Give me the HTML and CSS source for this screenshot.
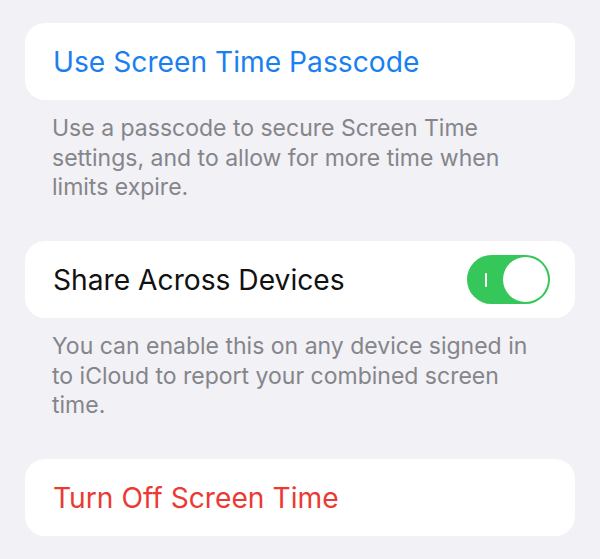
FILE: index.html
```html
<!DOCTYPE html>
<html lang="en">
<head>
<meta charset="utf-8">
<title>Screen Time</title>
<link rel="stylesheet" href="styles.css">
</head>
<body>
<main class="settings">
  <section class="group">
    <div class="cell">
      <span class="label label-link">Use Screen Time Passcode</span>
    </div>
    <p class="footer">Use a passcode to secure Screen Time settings, and to allow for more time when limits expire.</p>
  </section>

  <section class="group">
    <div class="cell">
      <span class="label">Share Across Devices</span>
      <span class="switch is-on" role="switch" aria-checked="true">
        <span class="switch-mark"></span>
        <span class="switch-knob"></span>
      </span>
    </div>
    <p class="footer">You can enable this on any device signed in to iCloud to report your combined screen time.</p>
  </section>

  <section class="group">
    <div class="cell">
      <span class="label label-destructive">Turn Off Screen Time</span>
    </div>
  </section>
</main>
</body>
</html>
```

FILE: styles.css
```css
html, body {
  margin: 0;
  padding: 0;
  background: #f1f1f6;
}

body {
  font-family: Inter, "Noto Sans", "Liberation Sans", sans-serif;
  -webkit-font-smoothing: antialiased;
}

.settings {
  display: flex;
  flex-direction: column;
  gap: 38.5px;
  padding: 23px 25px 0;
}

.group {
  display: flex;
  flex-direction: column;
}

.cell {
  display: flex;
  align-items: center;
  justify-content: space-between;
  height: 77px;
  padding: 0 25px 0 28px;
  background: #ffffff;
  border-radius: 20px;
  box-sizing: border-box;
}

.label {
  font-size: 28.2px;
  color: #111111;
}

.label-link {
  color: #1a7ff0;
}

.label-destructive {
  color: #ea3a33;
}

.footer {
  margin: 14px 0 0;
  padding: 0 35px 0 27px;
  font-size: 23px;
  line-height: 29.5px;
  color: #85858a;
}

.switch {
  position: relative;
  display: block;
  width: 83px;
  height: 49px;
  border-radius: 25px;
  background: #35c759;
}

.switch-mark {
  position: absolute;
  left: 18px;
  top: 18px;
  width: 2px;
  height: 14px;
  border-radius: 1px;
  background: #ffffff;
}

.switch-knob {
  position: absolute;
  right: 2px;
  top: 2px;
  width: 45px;
  height: 45px;
  border-radius: 50%;
  background: #ffffff;
}
```
